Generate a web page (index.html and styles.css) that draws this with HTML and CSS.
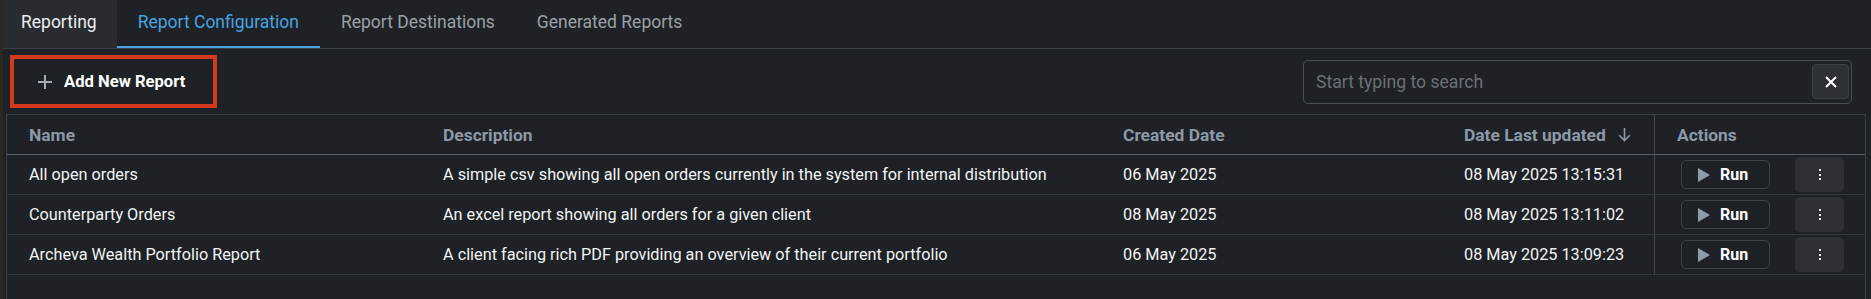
FILE: index.html
```html
<!DOCTYPE html>
<html lang="en">
<head>
<meta charset="utf-8">
<title>Report Configuration</title>
<link rel="stylesheet" href="styles.css">
</head>
<body>
<div class="app">
  <nav class="tabs">
    <div class="tab tab-home">Reporting</div>
    <div class="tab tab-active">Report Configuration</div>
    <div class="tab">Report Destinations</div>
    <div class="tab">Generated Reports</div>
  </nav>
  <main class="content">
    <div class="toolbar">
      <div class="highlight">
        <button class="add-btn">
          <svg class="plus" width="16" height="16" viewBox="0 0 16 16"><path d="M8 1v14M1 8h14" stroke="#a3abb3" stroke-width="2" fill="none"/></svg>
          <span>Add New Report</span>
        </button>
      </div>
      <div class="search">
        <span class="placeholder">Start typing to search</span>
        <button class="clear-btn"><svg width="14" height="14" viewBox="0 0 14 14"><path d="M2 2l10 10M12 2L2 12" stroke="#ffffff" stroke-width="2" fill="none"/></svg></button>
      </div>
    </div>
    <div class="table">
      <div class="row head">
        <div class="cell">Name</div>
        <div class="cell">Description</div>
        <div class="cell">Created Date</div>
        <div class="cell">Date Last updated
          <svg class="sort" width="13" height="15" viewBox="0 0 13 15"><path d="M6.5 1v12.5M1.2 8.2l5.3 5.3 5.3-5.3" stroke="#8d99a5" stroke-width="1.6" fill="none"/></svg>
        </div>
        <div class="cell actions">Actions</div>
      </div>
      <div class="row">
        <div class="cell">All open orders</div>
        <div class="cell">A simple csv showing all open orders currently in the system for internal distribution</div>
        <div class="cell">06 May 2025</div>
        <div class="cell">08 May 2025 13:15:31</div>
        <div class="cell actions">
          <button class="run-btn"><svg width="12" height="14" viewBox="0 0 12 14"><path d="M0 0L12 7L0 14Z" fill="#8e9aa5"/></svg><span>Run</span></button>
          <button class="more-btn"><span class="dots"><i></i><i></i><i></i></span></button>
        </div>
      </div>
      <div class="row">
        <div class="cell">Counterparty Orders</div>
        <div class="cell">An excel report showing all orders for a given client</div>
        <div class="cell">08 May 2025</div>
        <div class="cell">08 May 2025 13:11:02</div>
        <div class="cell actions">
          <button class="run-btn"><svg width="12" height="14" viewBox="0 0 12 14"><path d="M0 0L12 7L0 14Z" fill="#8e9aa5"/></svg><span>Run</span></button>
          <button class="more-btn"><span class="dots"><i></i><i></i><i></i></span></button>
        </div>
      </div>
      <div class="row">
        <div class="cell">Archeva Wealth Portfolio Report</div>
        <div class="cell">A client facing rich PDF providing an overview of their current portfolio</div>
        <div class="cell">06 May 2025</div>
        <div class="cell">08 May 2025 13:09:23</div>
        <div class="cell actions">
          <button class="run-btn"><svg width="12" height="14" viewBox="0 0 12 14"><path d="M0 0L12 7L0 14Z" fill="#8e9aa5"/></svg><span>Run</span></button>
          <button class="more-btn"><span class="dots"><i></i><i></i><i></i></span></button>
        </div>
      </div>
    </div>
  </main>
</div>
</body>
</html>
```

FILE: styles.css
```css
html, body {
  margin: 0;
  padding: 0;
  height: 299px;
  overflow: hidden;
  background: #1e2125;
}

body {
  font-family: Roboto, "Liberation Sans", sans-serif;
  color: #f2f3f4;
}

body::before {
  content: "";
  position: fixed;
  left: 0;
  top: 0;
  bottom: 0;
  width: 3px;
  background: #2a2922;
}

.app {
  display: flex;
  flex-direction: column;
  height: 299px;
}

.tabs {
  display: flex;
  height: 48px;
  border-bottom: 1px solid #3a3f46;
  flex: 0 0 auto;
}

.tab {
  padding: 0 21px;
  height: 48px;
  line-height: 44px;
  font-size: 17.5px;
  color: #9ba1a7;
  white-space: nowrap;
}

.tab-home {
  background: #282c30;
  color: #eceef0;
  padding: 0 20px 0 21px;
}

.tab-active {
  color: #4aa3e0;
  box-shadow: inset 0 -2px 0 #4aa3e0;
}

.content {
  flex: 1;
  display: flex;
  flex-direction: column;
  padding: 0 5px 0 6px;
}

.toolbar {
  height: 65px;
  display: flex;
  align-items: center;
  justify-content: space-between;
  padding: 0 14px 0 4px;
  flex: 0 0 auto;
}

.highlight {
  border: 4px solid #d43a1d;
  height: 45px;
  width: 199px;
  display: flex;
}

.add-btn {
  flex: 1;
  display: flex;
  align-items: center;
  gap: 11px;
  padding: 0 0 0 23px;
  background: #1e2125;
  border: none;
  color: #ffffff;
  font-family: Roboto, "Liberation Sans", sans-serif;
  font-weight: 700;
  font-size: 16.6px;
}

.plus {
  flex: 0 0 auto;
  margin-top: 1px;
}

.search {
  width: 549px;
  height: 44px;
  box-sizing: border-box;
  border: 1px solid #4a4f56;
  border-radius: 5px;
  display: flex;
  align-items: center;
  justify-content: space-between;
  padding: 0 2px 0 12px;
}

.placeholder {
  font-size: 17.6px;
  color: #6b7076;
}

.clear-btn {
  width: 37px;
  height: 35px;
  box-sizing: border-box;
  background: #2d3136;
  border: 1px solid #3d4248;
  border-radius: 4px;
  display: flex;
  align-items: center;
  justify-content: center;
  padding: 0;
}

.table {
  flex: 1;
  border-top: 1px solid #3a3f46;
  border-left: 1px solid #3a3f46;
  border-right: 1px solid #3a3f46;
}

.row {
  display: grid;
  grid-template-columns: 414px 680px 341px 212px 1fr;
  height: 40px;
  box-sizing: border-box;
  border-bottom: 1px solid #33383e;
  font-size: 16.25px;
}

.row.head {
  border-bottom-color: #55606b;
  color: #8d99a5;
  font-weight: 700;
  font-size: 17.4px;
}

.cell {
  display: flex;
  align-items: center;
  padding-left: 22px;
  white-space: nowrap;
}

.sort {
  margin-left: 12px;
}

.cell.actions {
  border-left: 1px solid #434850;
}

.row:not(.head) .cell.actions {
  justify-content: space-between;
  padding: 0 21px 0 26px;
}

.run-btn {
  width: 89px;
  height: 29px;
  box-sizing: border-box;
  border: 1px solid #3d4249;
  border-radius: 5px;
  background: transparent;
  display: flex;
  align-items: center;
  gap: 10px;
  padding: 0 0 0 16px;
  color: #ffffff;
  font-family: Roboto, "Liberation Sans", sans-serif;
  font-weight: 700;
  font-size: 16px;
}

.more-btn {
  width: 49px;
  height: 35px;
  border: none;
  border-radius: 5px;
  background: #2d3136;
  display: flex;
  align-items: center;
  justify-content: center;
  padding: 0;
}

.dots {
  display: flex;
  flex-direction: column;
  gap: 2.5px;
}

.dots i {
  display: block;
  width: 2px;
  height: 2px;
  background: #e6e8ea;
}
```
